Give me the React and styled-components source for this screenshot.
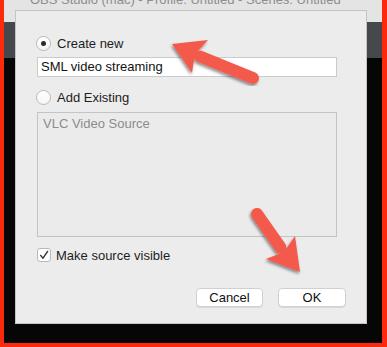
import React from 'react'
import styled, {createGlobalStyle} from 'styled-components'

const GlobalStyle = createGlobalStyle`
    html, body {
        margin: 0;
        padding: 0;
        background: #000;
    }
    body {
        font-family: "Liberation Sans", Arial, sans-serif;
        font-size: 13px;
    }
`

const Frame = styled.div`
    width: 387px;
    height: 347px;
    box-sizing: border-box;
    border-left: 4px solid #fc2a0d;
    border-right: 5px solid #fc2a0d;
    border-bottom: 4px solid #fc2a0d;
    overflow: hidden;
`

const Screen = styled.div`
    position: relative;
    height: 100%;
    display: flex;
    flex-direction: column;
    background: #060606;
`

const TitleBar = styled.div`
    height: 22px;
    background: #e4e4e4;
    overflow: hidden;
    color: #8d8d8d;
    font-size: 13px;
    line-height: 13px;
    padding-left: 26px;
    white-space: nowrap;
    span {
        display: block;
        margin-top: -7px;
    }
`

const ToolBand = styled.div`
    height: 36px;
    background: #46484b;
`

const Dialog = styled.div`
    position: absolute;
    left: 11px;
    top: 10px;
    width: 352px;
    height: 314px;
    box-sizing: border-box;
    background: #ececec;
    border: 1px solid #c4c4c4;
    padding: 24px 20px 0 20px;
    display: flex;
    flex-direction: column;
    color: #1d1d1d;
`

const OptionRow = styled.label`
    display: flex;
    align-items: center;
    height: 16px;
    gap: ${p => p.$gap || 6}px;
    margin-top: ${p => p.$top || 0}px;
    margin-left: ${p => p.$left || 0}px;
`

const Radio = styled.span`
    width: 15px;
    height: 15px;
    box-sizing: border-box;
    border-radius: 50%;
    border: 1px solid #b9b9b9;
    background: linear-gradient(#ffffff, #f6f6f6);
    display: flex;
    align-items: center;
    justify-content: center;
    &::after {
        content: '';
        width: 5px;
        height: 5px;
        border-radius: 50%;
        background: ${p => p.$checked ? '#2b2b2b' : 'transparent'};
    }
`

const Checkbox = styled.span`
    width: 14px;
    height: 14px;
    box-sizing: border-box;
    border-radius: 3px;
    border: 1px solid #b9b9b9;
    background: #fff;
    display: flex;
    align-items: center;
    justify-content: center;
`

const TextInput = styled.div`
    margin: 6px 0 0 1px;
    width: 300px;
    height: 20px;
    box-sizing: border-box;
    background: #fff;
    border: 1px solid #cbcbcb;
    padding-left: 3px;
    line-height: 18px;
    color: #111;
`

const ListBox = styled.div`
    margin: 7px 0 0 1px;
    width: 300px;
    height: 125px;
    box-sizing: border-box;
    border: 1px solid #c3c3c3;
    background: #ebebeb;
    padding: 3px 0 0 5px;
    color: #8c8c8c;
`

const ButtonBar = styled.div`
    margin-top: 25px;
    display: flex;
    justify-content: flex-end;
    gap: 15px;
`

const Button = styled.div`
    width: ${p => p.$w}px;
    height: 19px;
    box-sizing: border-box;
    background: #fff;
    border: 1px solid #d0d0d0;
    border-radius: 4px;
    box-shadow: 0 1px 0 rgba(0,0,0,0.08);
    display: flex;
    align-items: center;
    justify-content: center;
    color: #111;
`

const Overlay = styled.svg`
    position: absolute;
    left: -4px;
    top: 0;
    pointer-events: none;
`

function Arrow({tail, tip, head}) {
    const [tx, ty] = tail
    const [px, py] = tip
    const [w1, w2] = head
    const bx = (w1[0] + w2[0]) / 2
    const by = (w1[1] + w2[1]) / 2
    const nx = bx + (px - bx) * 0.18
    const ny = by + (py - by) * 0.18
    return (
        <g filter="url(#shadow)">
            <line x1={tx} y1={ty} x2={bx} y2={by} stroke="#f45a4c" strokeWidth="12" strokeLinecap="round"/>
            <polygon points={`${px},${py} ${w1[0]},${w1[1]} ${nx},${ny} ${w2[0]},${w2[1]}`} fill="#f45a4c"/>
        </g>
    )
}

function App() {
    return (
        <Frame>
            <GlobalStyle/>
            <Screen>
                <TitleBar><span>OBS Studio (mac) - Profile: Untitled - Scenes: Untitled</span></TitleBar>
                <ToolBand/>
                <Dialog>
                    <OptionRow>
                        <Radio $checked/>
                        <span>Create new</span>
                    </OptionRow>
                    <TextInput>SML video streaming</TextInput>
                    <OptionRow $top={12}>
                        <Radio/>
                        <span>Add Existing</span>
                    </OptionRow>
                    <ListBox>VLC Video Source</ListBox>
                    <OptionRow $top={10} $left={1} $gap={5}>
                        <Checkbox>
                            <svg width="10" height="10" viewBox="0 0 10 10">
                                <path d="M1.6 5.4 L4 8.2 L8.6 1.4" fill="none" stroke="#333" strokeWidth="1.4" strokeLinecap="round" strokeLinejoin="round"/>
                            </svg>
                        </Checkbox>
                        <span>Make source visible</span>
                    </OptionRow>
                    <ButtonBar>
                        <Button $w={67}>Cancel</Button>
                        <Button $w={68}>OK</Button>
                    </ButtonBar>
                </Dialog>
                <Overlay width="387" height="347" viewBox="0 0 387 347">
                    <defs>
                        <filter id="shadow" x="-20%" y="-20%" width="140%" height="140%">
                            <feDropShadow dx="-1" dy="2" stdDeviation="1.5" floodColor="#000" floodOpacity="0.45"/>
                        </filter>
                    </defs>
                    <Arrow tail={[253, 78]} tip={[172, 44]} head={[[208, 40], [192, 73]]}/>
                    <Arrow tail={[257, 214]} tip={[300, 272]} head={[[266, 259], [295, 236]]}/>
                </Overlay>
            </Screen>
        </Frame>
    )
}

export default App
